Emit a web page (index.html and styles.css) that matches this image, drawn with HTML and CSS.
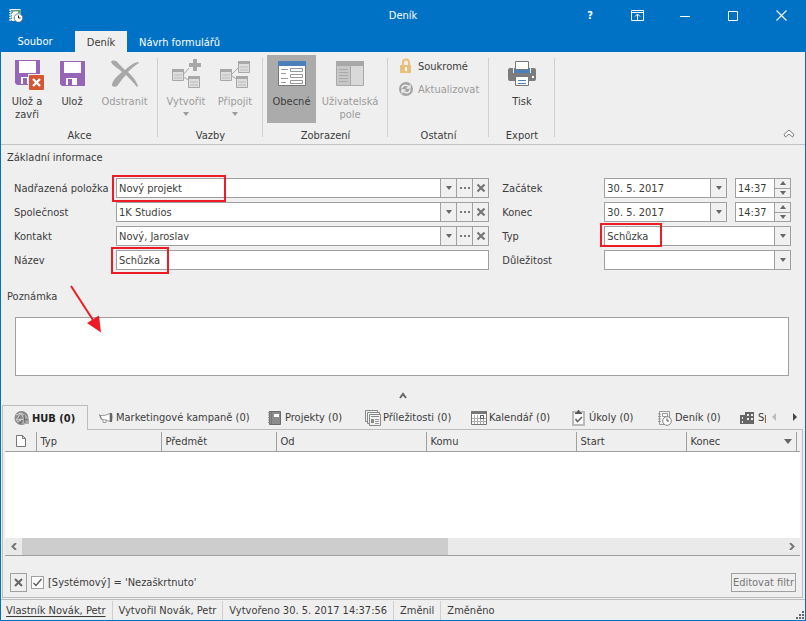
FILE: index.html
```html
<!DOCTYPE html>
<html lang="cs">
<head>
<meta charset="utf-8">
<title>Deník</title>
<link rel="stylesheet" href="styles.css">
</head>
<body>
<div class="window">
  <header class="titlebar">
    <svg class="app-icon" width="14" height="15" viewBox="0 0 14 15"><path d="M1.5 1h10v12h-10z" fill="#f4f7f2"/><path d="M2.5 2h9v3h-9z" fill="#5f9e83"/><path d="M4 3.500h5v2H4z" fill="#fff"/><path d="M0 2h2M0 4.500h2M0 7h2M0 9.500h2M0 12h2" stroke="#fff"/><path d="M2.500 2v11" stroke="#5f9e83" stroke-dasharray="1.500 1"/><circle cx="9.500" cy="10" r="4.300" fill="#fff" stroke="#3f5560" stroke-width=".7"/><path d="M9.500 7.500V10h2" stroke="#222" fill="none"/></svg>
    <h1 class="title">Deník</h1>
    <div class="window-buttons">
      <button class="win-btn help" aria-label="Nápověda">?</button>
      <button class="win-btn" aria-label="Zobrazení pásu karet"><svg width="13" height="11" viewBox="0 0 13 11"><path d="M.5.5h12v10H.5zM0 2.500h13M6.500 10V4M4 6.500l2.500-2.500L9 6.500" fill="none" stroke="#fff"/></svg></button>
      <button class="win-btn" aria-label="Minimalizovat"><svg width="10" height="11" viewBox="0 0 10 11"><path d="M0 6.500h10" stroke="#fff"/></svg></button>
      <button class="win-btn" aria-label="Maximalizovat"><svg width="10" height="10" viewBox="0 0 10 10"><path d="M.5.5h9v9h-9z" fill="none" stroke="#fff"/></svg></button>
      <button class="win-btn" aria-label="Zavřít"><svg width="11" height="11" viewBox="0 0 11 11"><path d="M.5.5l10 10M10.500.5l-10 10" stroke="#fff" stroke-width="1.100"/></svg></button>
    </div>
  </header>
  <nav class="ribbon-tabs">
    <button class="ribbon-tab file">Soubor</button>
    <button class="ribbon-tab active">Deník</button>
    <button class="ribbon-tab">Návrh formulářů</button>
  </nav>

  <section class="ribbon">
    <div class="group akce">
      <div class="group-body">
        <button class="tool narrow"><svg width="34" height="32" viewBox="-4 0 34 32"><path d="M1 2h25v25H3l-2-2z" fill="#9765b8"/><path d="M5 3h17v12H5z" fill="#fff"/><path d="M7 19h12v7H7z" fill="#fff"/><path d="M9 20h4v6H9z" fill="#9765b8"/><path d="M14 16h16v16H14z" fill="#efefef"/><rect x="15" y="17" width="15" height="15" rx="1" fill="#d65532"/><path d="M19 21l7 7M26 21l-7 7" stroke="#fff" stroke-width="2.400"/></svg><span>Ulož a zavři</span></button>
        <button class="tool narrow"><svg width="26" height="32" viewBox="0 0 26 32"><path d="M1 3h25v25H3l-2-2z" fill="#9765b8"/><path d="M5 4h17v11H5z" fill="#fff"/><path d="M7 20h11v7H7z" fill="#fff"/><path d="M9 21h4v6H9z" fill="#9765b8"/></svg><span>Ulož</span></button>
        <button class="tool wide" disabled><svg width="30" height="32" viewBox="0 0 30 32"><path d="M1 4C3 1 7 3 9 6l6 6c4-4 8-7 13-8l1 1c-5 3-8 6-11 9 4 4 8 8 10 14l-1 1c-4-5-8-9-11-12-4 4-6 7-8 10-2 3-7 2-6-1C3 22 7 18 12 14 8 10 3 8 1 4z" fill="#a8a8a8"/></svg><span>Odstranit</span></button>
      </div>
      <div class="group-name">Akce</div>
    </div>
    <div class="group vazby">
      <div class="group-body">
        <button class="tool" disabled><svg width="30" height="32" viewBox="0 0 30 32"><path d="M22 1h4v4h4v4h-4v4h-4V9h-4V5h4z" fill="#a8a8a8"/><path d="M12 17l6-7M12 19l6 3" stroke="#a8a8a8"/><g fill="#dedede" stroke="#a8a8a8"><path d="M1.500 11.500h11v11h-11z"/><path d="M17.500 18.500h11v11h-11z"/></g><path d="M1 11h12v3H1zM17 18h12v3H17z" fill="#a8a8a8"/><path d="M3 17h8M3 20h8M19 24h8M19 27h8" stroke="#bbb"/></svg><span>Vytvořit</span><i class="caret"></i></button>
        <button class="tool" disabled><svg width="30" height="32" viewBox="0 0 30 32"><path d="M12 16l7-7M12 18l6 4" stroke="#a8a8a8"/><g fill="#dedede" stroke="#a8a8a8"><path d="M.5 11.500h11v11H.500z"/><path d="M16.500 18.500h11v11h-11z"/><path d="M18.500 3.500h11v11h-11z"/></g><path d="M0 11h12v3H0zM16 18h12v3H16zM18 3h12v3H18z" fill="#a8a8a8"/><path d="M2 17h8M2 20h8M18 24h8M18 27h8M20 9h8M20 12h8" stroke="#bbb"/></svg><span>Připojit</span><i class="caret"></i></button>
      </div>
      <div class="group-name">Vazby</div>
    </div>
    <div class="group zobrazeni">
      <div class="group-body">
        <button class="tool pressed"><svg width="28" height="32" viewBox="0 0 28 32"><path d="M.5 3.500h27v24H.5z" fill="#fff" stroke="#777"/><path d="M0 3h28v5H0z" fill="#4b80ba"/><path d="M3 11.500h7M3 15.500h5M3 20.500h7M3 24.500h5" stroke="#999"/><g fill="#fff" stroke="#999"><path d="M12.500 10.500h12v3h-12zM12.500 16.500h12v3h-12zM12.500 22.500h12v3h-12z"/></g></svg><span>Obecné</span></button>
        <button class="tool wide" disabled><svg width="28" height="32" viewBox="0 0 28 32"><path d="M.5 3.500h27v24H.5z" fill="#d9d9d9" stroke="#a8a8a8"/><path d="M1 8h13v19H1z" fill="#c7c7c7"/><path d="M0 3h28v5H0z" fill="#a8a8a8"/><path d="M3 11.500h9M3 14.500h9M3 17.500h9M3 20.500h9M3 23.500h9M14.500 8v19" stroke="#a8a8a8"/></svg><span>Uživatelská pole</span></button>
      </div>
      <div class="group-name">Zobrazení</div>
    </div>
    <div class="group ostatni">
      <div class="group-body stacked">
        <button class="line-tool"><svg width="14" height="16" viewBox="0 0 14 16"><path d="M4 8V4.500a3 3 0 0 1 6 0V8" fill="none" stroke="#e9bf7c" stroke-width="2"/><rect x="1" y="7" width="11" height="8" fill="#e9bf7c"/><path d="M6 9h2v4H6z" fill="#fff"/></svg>Soukromé</button>
        <button class="line-tool" disabled><svg width="14" height="16" viewBox="0 0 14 16"><circle cx="7" cy="8" r="7" fill="#a3a3a3"/><path d="M3 7.500c0-4 5-4 7-1.500M11 8.500c0 4-5 4-7 1.500M11 3.500V7H7.500M3 12.500V9h3.500" fill="none" stroke="#eee" stroke-width="1.400"/></svg>Aktualizovat</button>
      </div>
      <div class="group-name">Ostatní</div>
    </div>
    <div class="group export">
      <div class="group-body">
        <button class="tool"><svg width="28" height="32" viewBox="0 0 28 32"><path d="M0 12q0-2 2-2h24q2 0 2 2v9q0 2-2 2H2q-2 0-2-2z" fill="#7c7c7c"/><path d="M5 9h18v6H5z" fill="#efefef"/><path d="M6 10h16v5H6z" fill="#4b80ba"/><path d="M7.500 3.500h13v8h-13z" fill="#fff" stroke="#777"/><path d="M7.500 18.500h13v9h-13z" fill="#fff" stroke="#777"/><path d="M10 22.500h8M10 25.500h8" stroke="#4b80ba"/><path d="M24 18h2v2h-2z" fill="#fff"/></svg><span>Tisk</span></button>
      </div>
      <div class="group-name">Export</div>
    </div>
    <button class="collapse-ribbon" aria-label="Sbalit pás karet"><svg width="12" height="9" viewBox="0 0 12 9"><path d="M1 5.500L6 1l5 4.500L9.500 8 6 5 2.500 8z" fill="#fff" stroke="#777"/></svg></button>
  </section>

  <main class="form">
    <h2 class="section-title">Základní informace</h2>
    <div class="fields">
      <label for="parent">Nadřazená položka</label>
      <div class="field"><input id="parent" value="Nový projekt"><button class="fb" aria-label="Rozbalit"><i class="caret"></i></button><button class="fb" aria-label="Vybrat"><i class="dots"></i></button><button class="fb" aria-label="Vymazat"><svg width="10" height="10" viewBox="0 0 10 10"><path d="M1.500 1.500l7 7M8.500 1.500l-7 7" stroke="#777" stroke-width="2.200"/></svg></button><span class="mark mark-parent"></span></div>
      <label class="second" for="start">Začátek</label>
      <div class="date-time"><div class="field date"><input id="start" value="30. 5. 2017"><button class="fb" aria-label="Kalendář"><i class="caret"></i></button></div><div class="field time"><input aria-label="Čas začátku" value="14:37"><span class="spin"><button aria-label="Více"><i class="caret up"></i></button><button aria-label="Méně"><i class="caret"></i></button></span></div></div>

      <label for="company">Společnost</label>
      <div class="field"><input id="company" value="1K Studios"><button class="fb" aria-label="Rozbalit"><i class="caret"></i></button><button class="fb" aria-label="Vybrat"><i class="dots"></i></button><button class="fb" aria-label="Vymazat"><svg width="10" height="10" viewBox="0 0 10 10"><path d="M1.500 1.500l7 7M8.500 1.500l-7 7" stroke="#777" stroke-width="2.200"/></svg></button></div>
      <label class="second" for="end">Konec</label>
      <div class="date-time"><div class="field date"><input id="end" value="30. 5. 2017"><button class="fb" aria-label="Kalendář"><i class="caret"></i></button></div><div class="field time"><input aria-label="Čas konce" value="14:37"><span class="spin"><button aria-label="Více"><i class="caret up"></i></button><button aria-label="Méně"><i class="caret"></i></button></span></div></div>

      <label for="contact">Kontakt</label>
      <div class="field"><input id="contact" value="Nový, Jaroslav"><button class="fb" aria-label="Rozbalit"><i class="caret"></i></button><button class="fb" aria-label="Vybrat"><i class="dots"></i></button><button class="fb" aria-label="Vymazat"><svg width="10" height="10" viewBox="0 0 10 10"><path d="M1.500 1.500l7 7M8.500 1.500l-7 7" stroke="#777" stroke-width="2.200"/></svg></button></div>
      <label class="second" for="type">Typ</label>
      <div class="field"><select id="type"><option>Schůzka</option></select><span class="fb"><i class="caret"></i></span><span class="mark mark-type"></span></div>

      <label for="name">Název</label>
      <div class="field"><input id="name" value="Schůzka"><span class="mark mark-name"></span></div>
      <label class="second" for="priority">Důležitost</label>
      <div class="field"><select id="priority"><option></option></select><span class="fb"><i class="caret"></i></span></div>
    </div>
    <div class="note">
      <label class="section-title" for="note">Poznámka</label>
      <textarea id="note"></textarea>
      <svg class="arrow" width="36" height="50" viewBox="0 0 36 50"><path d="M3 2l22 34" stroke="#ed1c24" stroke-width="2"/><path d="M19 39L31 31.500l2 17z" fill="#ed1c24"/></svg>
    </div>
    <button class="splitter" aria-label="Sbalit"><svg width="8" height="7" viewBox="0 0 8 7"><path d="M1 6l3-4 3 4" fill="none" stroke="#666" stroke-width="2"/></svg></button>
  </main>

  <section class="details">
    <div class="tabs">
      <button class="tab active"><svg width="16" height="16" viewBox="0 0 16 16"><circle cx="7.500" cy="8" r="7" fill="#888"/><path d="M2 10l5-7 3 6zM7 3l6 4M10 9l4 4M3 12l7-3M7 3l-5 2" fill="none" stroke="#d5d5d5"/><path d="M10 4l5 5v5H8z" fill="#aaa"/><path d="M10 5l1 8M10 9l4 1M5 14l3-4" stroke="#666"/></svg><span>HUB (0)</span></button>
      <button class="tab"><svg width="16" height="16" viewBox="0 0 16 16"><path d="M2 5.500Q8 6 12 3.500v8Q8 9.500 4 9.500zM5 9.500v3h3v-2.500" fill="#fff" stroke="#999"/><path d="M12 3h2q1 4 0 9h-2z" fill="#666"/><path d="M1.500 4.500l2 5" stroke="#777"/></svg><span>Marketingové kampaně (0)</span></button>
      <button class="tab"><svg width="16" height="16" viewBox="0 0 16 16"><path d="M2.500 1.500h11v13h-11z" fill="#8c8c8c" stroke="#6c6c6c"/><path d="M1 2.500h2M1 5h2M1 7.500h2M1 10h2M1 12.500h2" stroke="#888"/><path d="M4.500 2v12" stroke="#777"/><path d="M7 4h5v3H7z" fill="#fff"/></svg><span>Projekty (0)</span></button>
      <button class="tab"><svg width="16" height="16" viewBox="0 0 16 16"><g fill="#f2f2f2" stroke="#888"><path d="M.5.5h12v11H.5z"/><path d="M2.500 2.500h12v11h-12z"/><path d="M4.500 4.500h11v11h-11z"/></g><path d="M6 6h8v1H6zM6 9h3v4H6z" fill="#888"/><path d="M10 9.500h4M10 11.500h4M10 13.500h4" stroke="#999"/></svg><span>Příležitosti (0)</span></button>
      <button class="tab"><svg width="16" height="16" viewBox="0 0 16 16"><path d="M.5 1.500h15v13H.5z" fill="#fff" stroke="#777"/><path d="M0 1h16v3H0z" fill="#777"/><path d="M3.500 5v9M6.500 5v9M9.500 5v9M12.500 5v9M1 8.500h14M1 11.500h14" stroke="#aaa"/><path d="M9.500 5.500h3v3h-3z" fill="#fff" stroke="#555"/></svg><span>Kalendář (0)</span></button>
      <button class="tab"><svg width="16" height="16" viewBox="0 0 16 16"><path d="M2 2h11v13H2z" fill="#fafafa" stroke="#bbb" stroke-width="2"/><path d="M4 3l2-1 1-2h1l1 2 2 1v1H4z" fill="#555"/><path d="M4.500 9l2 2.500L11 7" fill="none" stroke="#666" stroke-width="1.600"/></svg><span>Úkoly (0)</span></button>
      <button class="tab"><svg width="16" height="16" viewBox="0 0 16 16"><path d="M2.500 1.500h10v13h-10z" fill="#f4f4f4" stroke="#999"/><path d="M5.500 3.500h5v3h-5z" fill="#fff" stroke="#999"/><path d="M1 4h3M1 6.500h3M1 9h3M1 11.500h3" stroke="#999"/><circle cx="10" cy="11" r="4.300" fill="#fff" stroke="#888"/><path d="M10 8.500V11h2" fill="none" stroke="#555"/></svg><span>Deník (0)</span></button>
      <button class="tab"><svg width="16" height="16" viewBox="0 0 16 16"><path d="M0 5h5V2h9v12H0z" fill="#666"/><path d="M2 7h1v2H2zM2 11h1v2H2zM7 4h2v2H7zM11 4h2v2h-2zM7 8h2v2H7zM11 8h2v2h-2z" fill="#eee"/></svg><span>Sp</span></button>
      <div class="tab-scroll"><button aria-label="Předchozí"><i class="side left"></i></button><button aria-label="Další"><i class="side right"></i></button></div>
    </div>
    <div class="panel">
      <table class="grid">
        <colgroup><col class="c-icon"><col class="c-typ"><col class="c-predmet"><col class="c-long"><col class="c-long"><col class="c-date"><col class="c-date"><col></colgroup>
        <thead><tr>
          <th aria-label="Příloha"><svg width="12" height="12" viewBox="0 0 12 12"><path d="M1.500.5h6l3 3v8h-9zM7.500.5v3h3" fill="#fff" stroke="#777"/></svg></th>
          <th>Typ</th><th>Předmět</th><th>Od</th><th>Komu</th><th>Start</th><th><span class="sorted">Konec<i class="caret big"></i></span></th><th></th>
        </tr></thead>
      </table>
      <div class="grid-space"></div>
      <div class="scrollbar"><button aria-label="Vlevo"><svg width="6" height="7" viewBox="0 0 6 7"><path d="M5 0L1.500 3.500 5 7" fill="none" stroke="#777" stroke-width="2"/></svg></button><div class="track"><div class="thumb"></div></div><button aria-label="Vpravo"><svg width="6" height="7" viewBox="0 0 6 7"><path d="M1 0l3.500 3.500L1 7" fill="none" stroke="#777" stroke-width="2"/></svg></button></div>
      <div class="filter">
        <button class="clear" aria-label="Zrušit filtr"><svg width="9" height="9" viewBox="0 0 9 9"><path d="M1 1l7 7M8 1L1 8" stroke="#666" stroke-width="2"/></svg></button>
        <label class="check"><input type="checkbox" checked><svg width="9" height="9" viewBox="0 0 9 9"><path d="M.5 5L3 7.500 8.500 1" fill="none" stroke="#555" stroke-width="1.300"/></svg><span>[Systémový] = 'Nezaškrtnuto'</span></label>
        <button class="edit">Editovat filtr</button>
      </div>
    </div>
  </section>

  <footer class="status">
    <a href="#">Vlastník Novák, Petr</a><span>Vytvořil Novák, Petr</span><span>Vytvořeno 30. 5. 2017 14:37:56</span><span>Změnil</span><span>Změněno</span>
    <svg class="grip" width="8" height="8" viewBox="0 0 8 8"><path d="M6 0h2v2H6zM3 3h2v2H3zM6 3h2v2H6zM0 6h2v2H0zM3 6h2v2H3zM6 6h2v2H6z" fill="#666"/></svg>
  </footer>
</div>
</body>
</html>
```
FILE: styles.css
```css
* { box-sizing: border-box; }

body {
  margin: 0;
  background: #efefef;
  color: #3c3c3c;
}

body, button, input, select, textarea {
  font: 11px/13px "DejaVu Sans Condensed", "Noto Sans", sans-serif;
}

button {
  padding: 0;
  border: 0;
  background: none;
  color: inherit;
}

svg { display: block; flex: none; }

.window {
  display: flex;
  flex-direction: column;
  min-height: 100vh;
  border: 1px solid #0072c6;
  border-top: 0;
}

/* title bar */
.titlebar {
  display: grid;
  grid-template-columns: 1fr auto 1fr;
  align-items: center;
  height: 31px;
  background: #0072c6;
  color: #fff;
}
.app-icon { margin-left: 8px; }
.title { margin: 0; font-size: 11px; font-weight: normal; }
.window-buttons { display: flex; justify-content: flex-end; }
.win-btn {
  display: flex;
  align-items: center;
  justify-content: center;
  width: 48px;
  height: 31px;
}
.win-btn.help { width: 46px; font-weight: bold; }

.ribbon-tabs {
  display: flex;
  height: 21px;
  background: #0072c6;
  color: #fff;
}
.ribbon-tab { padding: 1px 12px 0; }
.ribbon-tab.file { width: 74px; padding: 0 6px 0 0; }
.ribbon-tab.active { width: 52px; padding: 1px 0 0; background: #efefef; color: #3c3c3c; }

/* ribbon */
.ribbon {
  display: flex;
  height: 93px;
  padding-top: 3px;
  border-bottom: 1px solid #c3c3c3;
}
.group {
  position: relative;
  display: flex;
  flex-direction: column;
  flex: none;
}
.group::after {
  content: "";
  position: absolute;
  top: 3px;
  right: 0;
  bottom: 7px;
  width: 1px;
  background: #cfcfcf;
}
.akce { width: 157px; }
.vazby { width: 105px; }
.zobrazeni { width: 125px; }
.ostatni { width: 101px; }
.export { width: 66px; }
.group-body { display: flex; justify-content: center; height: 68px; }
.group-name { margin-top: 6px; text-align: center; }
.tool {
  display: flex;
  flex-direction: column;
  align-items: center;
  gap: 5px;
  width: 49px;
  padding-top: 3px;
}
.tool.narrow { width: 45px; }
.tool.wide { width: 60px; }
.zobrazeni .tool.wide { width: 68px; }
.tool:disabled, .line-tool:disabled { color: #9b9b9b; }
.tool:disabled .caret { border-top-color: #9b9b9b; }
.tool .caret { margin-top: -1px; }
.tool.pressed { background: #ababab; }
.stacked { flex-direction: column; justify-content: flex-start; padding: 3px 0 0 11px; gap: 7px; }
.line-tool { display: flex; align-items: center; gap: 5px; height: 16px; }
.collapse-ribbon { align-self: flex-end; margin: 0 10px 6px auto; }

.caret {
  display: block;
  width: 0;
  height: 0;
  border: 3px solid transparent;
  border-top: 4px solid #666;
  border-bottom: 0;
}
.caret.up { border-top: 0; border-bottom: 4px solid #666; }
.caret.big { border-width: 5px 4px 0; }

/* form */
.section-title {
  display: block;
  margin: 0 0 0 6px;
  font-size: 11px;
  font-weight: normal;
}
.form { padding-top: 6px; }
.fields {
  display: grid;
  grid-template-columns: 102px 2fr 115px 1fr;
  align-items: center;
  row-gap: 4px;
  margin: 14px 14px 0 13px;
}
.fields .second { padding-left: 13px; }
.field {
  position: relative;
  display: flex;
  height: 20px;
  border: 1px solid #a0a0a0;
  background: #fff;
}
.field input, .field select {
  flex: 1;
  min-width: 0;
  width: 0;
  padding: 0 2px;
  border: 0;
  outline: 0;
  background: none;
  color: #3c3c3c;
  appearance: none;
}
.fb {
  display: flex;
  align-items: center;
  justify-content: center;
  flex: none;
  width: 16px;
  border-left: 1px solid #a0a0a0;
  background: #f0f0f0;
}
.dots {
  width: 10px;
  height: 2px;
  background: repeating-linear-gradient(90deg, #777 0 2px, transparent 2px 4px);
}
.date-time { display: flex; gap: 8px; }
.date { flex: 1; }
.time { width: 56px; }
.spin {
  display: flex;
  flex-direction: column;
  width: 16px;
  border-left: 1px solid #a0a0a0;
  background: #f0f0f0;
}
.spin button { display: flex; flex: 1; align-items: center; justify-content: center; }
.spin button + button { border-top: 1px solid #a0a0a0; }

.mark {
  position: absolute;
  border: 2px solid #ed1c24;
  pointer-events: none;
}
.mark-parent { left: -5px; top: -4px; width: 114px; height: 27px; }
.mark-name { left: -6px; top: -4px; width: 58px; height: 27px; }
.mark-type { left: -5px; top: -4px; width: 62px; height: 24px; }

.note { position: relative; margin-top: 20px; }
.note textarea {
  display: block;
  width: calc(100% - 30px);
  height: 59px;
  margin: 14px 16px 0 14px;
  border: 1px solid #a0a0a0;
  background: #fff;
  resize: none;
}
.arrow { position: absolute; left: 67px; top: -6px; }
.splitter { display: block; margin: 16px auto 6px; }

/* detail tabs */
.details {
  display: flex;
  flex-direction: column;
  flex: 1;
  padding: 0 2px 0 1px;
}
.tabs {
  display: grid;
  grid-template-columns: 86px 169px 98px 106px 100px 86px 83px 36px 1fr;
  height: 25px;
  margin-bottom: -1px;
}
.tab {
  display: flex;
  align-items: center;
  gap: 2px;
  min-width: 0;
  padding-left: 10px;
  overflow: hidden;
  white-space: nowrap;
}
.tab.active {
  position: relative;
  padding-left: 11px;
  border: 1px solid #bdbdbd;
  border-bottom: 0;
  background: #efefef;
  color: #222;
  font-weight: bold;
}
.tab-scroll { display: flex; align-items: center; justify-content: space-between; padding: 0 6px 2px; }
.side { display: block; border: 4px solid transparent; }
.side.left { border-right-color: #bbb; border-left: 0; }
.side.right { border-left-color: #444; border-right: 0; }

.panel {
  display: flex;
  flex-direction: column;
  flex: 1;
  padding: 2px 2px 0;
  border: 1px solid #bdbdbd;
}
.grid {
  width: 100%;
  table-layout: fixed;
  border-collapse: collapse;
  border-bottom: 1px solid #a0a0a0;
}
.grid th {
  height: 19px;
  padding: 0 4px;
  border-right: 1px solid #a0a0a0;
  font-weight: normal;
  text-align: left;
}
.grid th:first-child { padding-left: 10px; }
.grid th:last-child { border-right: 0; padding: 0; }
.c-icon { width: 31px; }
.c-typ { width: 125px; }
.c-predmet { width: 115px; }
.c-long { width: 150px; }
.c-date { width: 110px; }
.sorted { display: flex; align-items: center; justify-content: space-between; }
.grid-space { flex: 1; background: #fff; }
.scrollbar {
  display: flex;
  height: 18px;
  border-bottom: 1px solid #a0a0a0;
  background: #eaeaea;
}
.scrollbar button { display: flex; align-items: center; justify-content: center; width: 17px; }
.track { flex: 1; }
.thumb { width: 56%; height: 100%; background: #cdcdcd; }
.filter {
  display: flex;
  align-items: center;
  height: 41px;
  padding: 12px 4px 0 5px;
}
.clear {
  display: flex;
  align-items: center;
  justify-content: center;
  width: 17px;
  height: 19px;
  border: 1px solid #a0a0a0;
}
.check { position: relative; display: flex; align-items: center; gap: 4px; margin-left: 4px; }
.check input {
  width: 13px;
  height: 13px;
  margin: 0;
  border: 1px solid #a0a0a0;
  background: #fff;
  appearance: none;
}
.check svg { position: absolute; left: 2px; top: 2px; }
.edit {
  height: 19px;
  margin-left: auto;
  padding: 0 1px;
  border: 1px solid #a0a0a0;
  color: #777;
}

/* status bar */
.status {
  display: flex;
  align-items: center;
  height: 21px;
  margin-top: 1px;
  padding-left: 5px;
  border-top: 1px solid #bdbdbd;
}
.status a { margin-right: 6px; color: inherit; text-underline-offset: 2px; }
.status span { padding: 3px 6px; border-left: 1px solid #cfcfcf; }
.grip { margin: auto 1px 1px auto; }
```
